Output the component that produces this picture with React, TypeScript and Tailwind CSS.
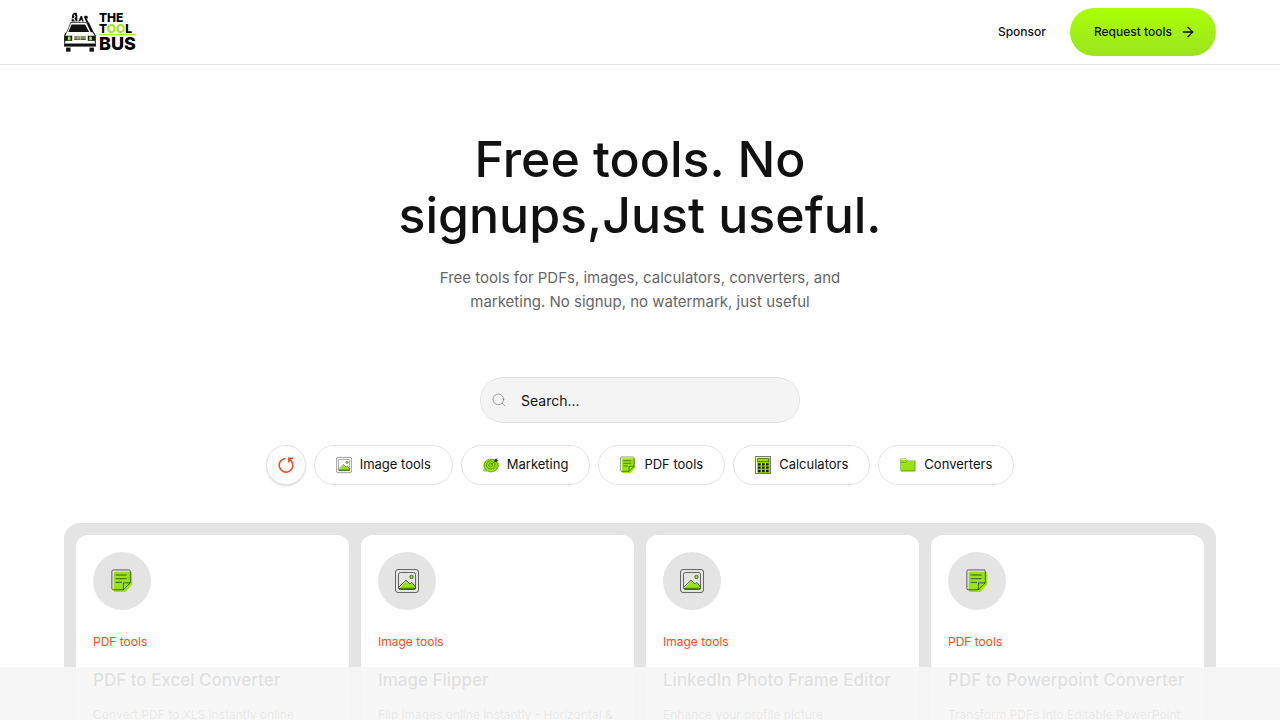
import { ArrowRight, Search } from "lucide-react";

type IconProps = { className?: string };

function VanLogo({ className }: IconProps) {
  return (
    <svg viewBox="0 0 94 118" className={className} aria-hidden="true">
      <path d="M22 28l2-20 5-6h8l2 8v18z" fill="#111" />
      <path d="M29 8l4 5-4 6 5 9M24 20h5" stroke="#fff" strokeWidth="3" fill="none" />
      <path d="M42 28l7-16h4l5 16h-5l-2-6-4 6z" fill="#111" />
      <path d="M58 14l6-4 6 3v6l-4-1 10 20h-7L61 19z" fill="#111" />
      <path d="M8 60L20 31h52l14 29" fill="#fff" stroke="#111" strokeWidth="2" />
      <path d="M13 59L22 37h40l12 22z" fill="#111" />
      <path d="M66 32h7l15 30v8h-5z" fill="#111" />
      <path d="M6 60h80l6 8v34H2V66z" fill="#fff" />
      <path d="M7 60L2 69v24M86 60l6 9v24" stroke="#111" strokeWidth="3" fill="none" />
      <rect x="1" y="70" width="91" height="15" fill="#111" />
      <rect x="24" y="68" width="46" height="18" fill="#fff" />
      <path d="M30 74h34M30 80h34" stroke="#111" strokeWidth="3" />
      <path d="M41 61v24M48 61v24" stroke="#c9f57a" strokeWidth="2" />
      <rect x="11" y="72" width="8" height="11" rx="2" fill="#a3f01a" />
      <rect x="74" y="72" width="8" height="11" rx="2" fill="#a3f01a" />
      <rect x="0" y="93" width="94" height="9" fill="#111" />
      <rect x="6" y="105" width="13" height="12" fill="#111" />
      <rect x="75" y="105" width="13" height="12" fill="#111" />
    </svg>
  );
}

function NoteIcon({ className }: IconProps) {
  return (
    <svg viewBox="0 0 24 26" className={className} fill="none" aria-hidden="true">
      <path d="M4.500 3H21q2 0 2 2v11.500L16 25H5q-2 0-2-2V5q0-2 1.500-2z" fill="#98e312" />
      <g stroke="#222" strokeOpacity="0.75">
        <path d="M2.500 1h17q1.500 0 1.500 1.500v12.500L13.500 22.500h-11Q1 22.500 1 21V2.500Q1 1 2.500 1z" />
        <path d="M13.500 22.500V15H21M5 6.500h12M5 10.500h12M5 14.500h7" />
      </g>
    </svg>
  );
}

function PictureIcon({ className }: IconProps) {
  return (
    <svg viewBox="0 0 24 24" className={className} fill="none" aria-hidden="true">
      <path d="M4 20.500l7-9 4.500 4 2-1.500 3.500 4v2.500z" fill="#98e312" />
      <path d="M4 19.500h16.500" stroke="#3c8a05" strokeWidth="1.500" />
      <circle cx="16.500" cy="8" r="1.700" fill="#98e312" stroke="#444" strokeWidth="0.800" />
      <g stroke="#222" strokeOpacity="0.65">
        <rect x="0.500" y="0.500" width="23" height="23" rx="2.500" />
        <rect x="3.500" y="3.500" width="17" height="17" rx="2" />
        <path d="M3.500 18.500l7.500-7.500 4 4 2-1.500 3.500 4.500" />
      </g>
    </svg>
  );
}

function TargetIcon({ className }: IconProps) {
  return (
    <svg viewBox="0 0 24 24" className={className} fill="none" aria-hidden="true">
      <ellipse cx="12.500" cy="12.500" rx="11.500" ry="9.500" fill="#98e312" />
      <g stroke="#286003" strokeOpacity="0.8">
        <path d="M17 4.500A10.500 9.500 0 1 0 21 8M2 17.500L1 21h5" />
        <ellipse cx="11.500" cy="12" rx="6.500" ry="6" />
        <ellipse cx="11.500" cy="12" rx="3" ry="2.800" />
        <path d="M11.500 12L20 5" />
      </g>
      <path d="M17 7V4l3-2 1 2 2 1-3 3z" fill="#333" />
    </svg>
  );
}

function CalculatorIcon({ className }: IconProps) {
  return (
    <svg viewBox="0 0 24 27" className={className} fill="none" aria-hidden="true">
      <rect x="3" y="2.500" width="20" height="23.500" fill="#98e312" />
      <rect x="0.750" y="0.750" width="22.500" height="25.500" stroke="#777" strokeWidth="1.500" />
      <rect x="3.500" y="4" width="17" height="4.500" stroke="#4d6b2c" strokeWidth="1.200" />
      <path d="M4.500 12.500h4M10.500 12.500h4M16.500 12.500h4M4.500 17.500h4M10.500 17.500h4M16.500 17.500h4M4.500 22.500h4M10.500 22.500h4M16.500 22.500h4" stroke="#222" strokeWidth="3.500" />
    </svg>
  );
}

function FolderIcon({ className }: IconProps) {
  return (
    <svg viewBox="0 0 24 24" className={className} fill="none" aria-hidden="true">
      <path d="M1 4h8l2 2h12.500V21q0 1-1 1H1z" fill="#98e312" />
      <path d="M.7 19V2.500h8L11 5h11v15.500H2Q.7 20.500.7 19zM1 8h8l2-3" stroke="#3f7d0a" strokeOpacity="0.6" />
    </svg>
  );
}

function ResetIcon({ className }: IconProps) {
  return (
    <svg viewBox="0 0 16 16" className={className} fill="none" stroke="#f04e23" strokeWidth="1.600" aria-hidden="true">
      <path d="M7.500 1.500A6.800 6.800 0 1 0 13.500 4.300" />
      <path d="M15 1.300h-4.200v4.200M11 1.500l3 3" />
    </svg>
  );
}

const categories = [
  { name: "Image tools", Icon: PictureIcon },
  { name: "Marketing", Icon: TargetIcon },
  { name: "PDF tools", Icon: NoteIcon },
  { name: "Calculators", Icon: CalculatorIcon },
  { name: "Converters", Icon: FolderIcon },
];

const tools = [
  { title: "PDF to Excel Converter", category: "PDF tools", text: "Convert PDF to XLS instantly online", Icon: NoteIcon },
  { title: "Image Flipper", category: "Image tools", text: "Flip images online instantly - Horizontal &", Icon: PictureIcon },
  { title: "LinkedIn Photo Frame Editor", category: "Image tools", text: "Enhance your profile picture", Icon: PictureIcon },
  { title: "PDF to Powerpoint Converter", category: "PDF tools", text: "Transform PDFs into Editable PowerPoint", Icon: NoteIcon },
];

export default function App() {
  return (
    <div className="min-h-screen bg-white font-['Inter',sans-serif] text-[#111]">
      <header className="border-b border-[#e4e4e4]">
        <div className="flex h-16 items-center justify-between px-16">
          <a href="#" className="flex items-center gap-[3px]" aria-label="The Tool Bus">
            <VanLogo className="h-10 w-8" />
            <span className="flex flex-col font-extrabold text-black">
              <span className="text-xs leading-[11px]">THE</span>
              <span className="border-b border-[#a3f01a] text-xs leading-[11px]">
                T<span className="text-[#a0e818]">OO</span>L
              </span>
              <span className="text-lg leading-[18px]">BUS</span>
            </span>
          </a>
          <nav className="flex items-center gap-6">
            <a href="#sponsor" className="text-xs font-medium">Sponsor</a>
            <a
              href="#request"
              className="flex h-12 items-center gap-2 rounded-full bg-linear-to-b from-[#aaff00] to-[#9be31c] pr-5 pl-6 text-xs font-medium"
            >
              Request tools
              <ArrowRight className="size-4" strokeWidth={2} />
            </a>
          </nav>
        </div>
      </header>

      <main>
        <section className="flex flex-col items-center pt-[66px]">
          <h1 className="max-w-[520px] text-center text-[50px] leading-14 font-medium">
            Free tools. No signups,Just useful.
          </h1>
          <p className="mt-[23px] max-w-[420px] text-center text-[15px] leading-6 text-[#666]">
            Free tools for PDFs, images, calculators, converters, and marketing. No signup, no watermark, just useful
          </p>
          <label className="mt-[63px] flex h-[46px] w-80 items-center gap-[14px] rounded-full border border-[#e2e2e2] bg-[#f4f4f4] px-[10px]">
            <Search className="size-4 shrink-0 text-[#888]" strokeWidth={1.25} />
            <input
              type="search"
              aria-label="Search tools"
              placeholder="Search..."
              className="h-6 w-full bg-transparent text-sm text-[#111] outline-none placeholder:text-[#111]"
            />
          </label>
          <div className="mt-[22px] flex flex-wrap items-center justify-center gap-2">
            <button
              type="button"
              aria-label="Reset filters"
              className="flex size-10 items-center justify-center rounded-full border border-[#e4e4e4] bg-white shadow-[0_1px_2px_rgba(0,0,0,0.15)]"
            >
              <ResetIcon className="size-4" />
            </button>
            {categories.map(({ name, Icon }) => (
              <button
                key={name}
                type="button"
                className="flex h-10 items-center gap-2 rounded-full border border-[#e4e4e4] bg-white px-[21px] text-[13px]"
              >
                <Icon className="h-[18px] w-4" />
                {name}
              </button>
            ))}
          </div>
        </section>

        <section className="mx-16 mt-[38px] grid grid-cols-4 gap-3 rounded-2xl bg-[#e4e4e4] p-3">
          {tools.map(({ title, category, text, Icon }) => (
            <article key={title} className="flex flex-col rounded-xl bg-white py-[17px] pr-2 pl-[17px]">
              <span className="flex size-[58px] items-center justify-center rounded-full bg-[#e4e4e4]">
                <Icon className="size-6" />
              </span>
              <span className="mt-[22px] text-xs leading-5 text-[#f04e23]">{category}</span>
              <h2 className="mt-4 text-[17px] leading-6 font-medium">{title}</h2>
              <p className="mt-[13px] text-xs leading-5 text-[#666]">{text}</p>
            </article>
          ))}
        </section>
      </main>

      <div className="fixed inset-x-0 bottom-0 h-[53px] bg-[#f6f6f6]/90" />
    </div>
  );
}
